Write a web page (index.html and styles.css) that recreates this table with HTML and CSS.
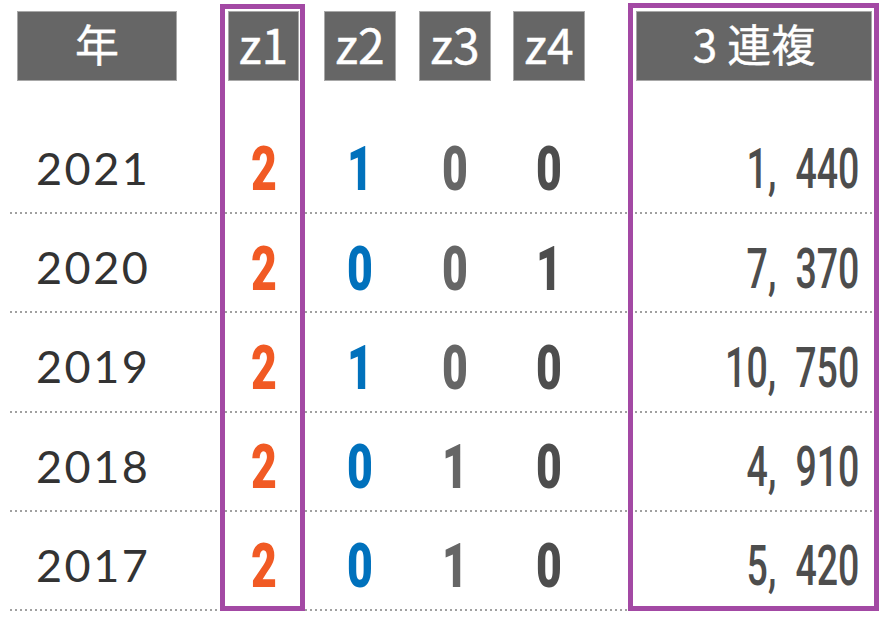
FILE: index.html
```html
<!DOCTYPE html>
<html lang="ja">
<head>
<meta charset="utf-8">
<title>年別 3連複</title>
<link rel="stylesheet" href="styles.css">
</head>
<body>
<div class="table">
  <div class="row head">
    <div class="cell c-year"><div class="hbox">年</div></div>
    <div class="cell c-z1"><div class="hbox lat">z1</div></div>
    <div class="cell c-z2"><div class="hbox lat">z2</div></div>
    <div class="cell c-z3"><div class="hbox lat">z3</div></div>
    <div class="cell c-z4"><div class="hbox lat">z4</div></div>
    <div class="cell c-ren"><div class="hbox">3 連複</div></div>
  </div>

  <div class="row data first">
    <div class="cell c-year"><span class="year">2021</span></div>
    <div class="cell c-z1"><span class="zv orange">2</span></div>
    <div class="cell c-z2"><span class="zv blue">1</span></div>
    <div class="cell c-z3"><span class="zv gray">0</span></div>
    <div class="cell c-z4"><span class="zv dark">0</span></div>
    <div class="cell c-ren"><span class="pay">1,&ensp;440</span></div>
  </div>

  <div class="row data">
    <div class="cell c-year"><span class="year">2020</span></div>
    <div class="cell c-z1"><span class="zv orange">2</span></div>
    <div class="cell c-z2"><span class="zv blue">0</span></div>
    <div class="cell c-z3"><span class="zv gray">0</span></div>
    <div class="cell c-z4"><span class="zv dark">1</span></div>
    <div class="cell c-ren"><span class="pay">7,&ensp;370</span></div>
  </div>

  <div class="row data">
    <div class="cell c-year"><span class="year">2019</span></div>
    <div class="cell c-z1"><span class="zv orange">2</span></div>
    <div class="cell c-z2"><span class="zv blue">1</span></div>
    <div class="cell c-z3"><span class="zv gray">0</span></div>
    <div class="cell c-z4"><span class="zv dark">0</span></div>
    <div class="cell c-ren"><span class="pay">10,&ensp;750</span></div>
  </div>

  <div class="row data">
    <div class="cell c-year"><span class="year">2018</span></div>
    <div class="cell c-z1"><span class="zv orange">2</span></div>
    <div class="cell c-z2"><span class="zv blue">0</span></div>
    <div class="cell c-z3"><span class="zv gray">1</span></div>
    <div class="cell c-z4"><span class="zv dark">0</span></div>
    <div class="cell c-ren"><span class="pay">4,&ensp;910</span></div>
  </div>

  <div class="row data">
    <div class="cell c-year"><span class="year">2017</span></div>
    <div class="cell c-z1"><span class="zv orange">2</span></div>
    <div class="cell c-z2"><span class="zv blue">0</span></div>
    <div class="cell c-z3"><span class="zv gray">1</span></div>
    <div class="cell c-z4"><span class="zv dark">0</span></div>
    <div class="cell c-ren"><span class="pay">5,&ensp;420</span></div>
  </div>

  <div class="hl hl-z1"></div>
  <div class="hl hl-ren"></div>
</div>
</body>
</html>
```

FILE: styles.css
```css
html, body {
  margin: 0;
  padding: 0;
  background: #ffffff;
}

body {
  width: 887px;
  height: 625px;
  overflow: hidden;
  font-family: "Noto Sans CJK JP", "Noto Sans", sans-serif;
}

.table {
  position: relative;
  width: 887px;
  height: 625px;
  padding-top: 11px;
  box-sizing: border-box;
}

.row {
  display: flex;
  margin-left: 10px;
  width: 863px;
  padding-left: 7px;
  box-sizing: border-box;
}

.row.head {
  height: 70px;
}

.row.data {
  height: 99.25px;
  padding-top: 12px;
  padding-bottom: 2px;
  align-items: center;
  background-image: linear-gradient(to right, #a0a0a0 0 2px, transparent 2px 5px);
  background-size: 5px 2px;
  background-repeat: repeat-x;
  background-position: left bottom;
}

.row.data.first {
  margin-top: 33.75px;
}

.cell {
  display: flex;
  align-items: center;
  justify-content: center;
  height: 100%;
  flex: none;
}

.c-year { width: 160px; }
.c-z1 { width: 71px; margin-left: 51px; }
.c-z2 { width: 72px; margin-left: 25px; }
.c-z3 { width: 72px; margin-left: 23px; }
.c-z4 { width: 72px; margin-left: 22px; }
.c-ren { width: 236px; margin-left: 51px; }

.row.data .c-year {
  justify-content: flex-start;
  padding-left: 19px;
  box-sizing: border-box;
}

.row.data .c-ren {
  justify-content: flex-end;
  padding-right: 13px;
  box-sizing: border-box;
}

.hbox {
  width: 100%;
  height: 100%;
  box-sizing: border-box;
  background: #666666;
  border: 1px solid #a8a8a8;
  color: #ffffff;
  font-family: "Noto Sans CJK JP", "Noto Sans", sans-serif;
  font-weight: 400;
  -webkit-text-stroke: 0.4px #ffffff;
  font-size: 44px;
  line-height: 1;
  display: flex;
  align-items: center;
  justify-content: center;
  padding-bottom: 7px;
}

.hbox.lat {
  font-size: 48px;
  padding-bottom: 6px;
}

.year {
  font-family: Lato, "Noto Sans", sans-serif;
  font-weight: 400;
  font-size: 45px;
  letter-spacing: 2.5px;
  line-height: 1;
  color: #333333;
  position: relative;
  top: -1px;
}

.zv {
  display: inline-block;
  font-family: Roboto, "Liberation Sans", sans-serif;
  font-weight: 900;
  font-size: 62px;
  line-height: 1;
  transform: scaleX(0.72);
}

.orange { color: #f15a24; }
.blue { color: #0071bc; }
.gray { color: #666666; }
.dark { color: #4d4d4d; }

.pay {
  display: inline-block;
  font-family: Roboto, "Liberation Sans", sans-serif;
  font-weight: 500;
  font-size: 56px;
  line-height: 1;
  color: #4d4d4d;
  white-space: pre;
  transform: scaleX(0.67);
  transform-origin: right center;
}

.hl {
  position: absolute;
  border: 5px solid #a349a4;
  box-sizing: border-box;
  pointer-events: none;
}

.hl-z1 {
  left: 220px;
  top: 4px;
  width: 85px;
  height: 607px;
}

.hl-ren {
  left: 628px;
  top: 3px;
  width: 251px;
  height: 608px;
}
```
